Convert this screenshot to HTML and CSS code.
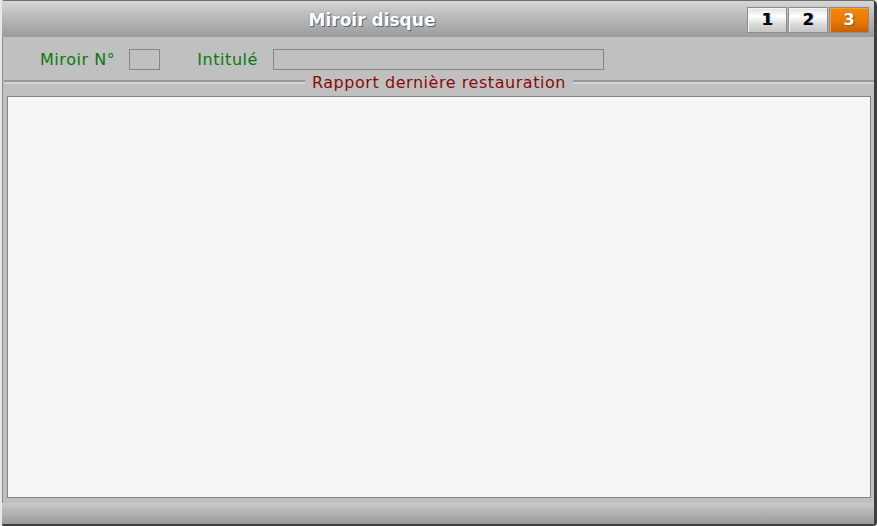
FILE: index.html
```html
<!DOCTYPE html>
<html lang="fr">
<head>
<meta charset="utf-8">
<title>Miroir disque</title>
<link rel="stylesheet" href="styles.css">
</head>
<body>
<div class="window">
  <div class="titlebar">
    <div class="title">Miroir disque</div>
    <div class="tabs">
      <div class="tab">1</div>
      <div class="tab">2</div>
      <div class="tab active">3</div>
    </div>
  </div>
  <div class="fields">
    <span class="label">Miroir N°</span>
    <span class="input small"></span>
    <span class="label second">Intitulé</span>
    <span class="input wide"></span>
  </div>
  <div class="group">
    <span class="line left"></span>
    <span class="legend">Rapport dernière restauration</span>
    <span class="line right"></span>
  </div>
  <div class="report"></div>
  <div class="footer"></div>
</div>
</body>
</html>
```
FILE: styles.css
```css
html, body {
  margin: 0;
  padding: 0;
  background: #dfe8e8;
}
.window {
  width: 877px;
  height: 526px;
  box-sizing: border-box;
  background: #c0c0c0;
  border-left: 2px solid #e8e8e8;
  box-shadow: inset 1px 0 0 #8a8a8a;
  border-right: 3px solid #3e3e3e;
  border-radius: 4px 5px 4px 3px;
  display: flex;
  flex-direction: column;
  font-family: "DejaVu Sans", Verdana, sans-serif;
  overflow: hidden;
}
.titlebar {
  height: 36px;
  border-top: 1px solid #6e6e6e;
  background: linear-gradient(#d6d6d6, #bcbcbc 40%, #9c9c9c);
  display: flex;
  align-items: center;
}
.title {
  flex: 1;
  text-align: center;
  color: #ffffff;
  font-weight: bold;
  font-size: 17px;
  text-shadow: 1px 1px 0 #5a6470, 0 0 2px #8090a0;
  padding-top: 1px;
  padding-right: 5px;
}
.tabs {
  display: flex;
  gap: 1px;
  margin-right: 5px;
  padding-top: 1px;
}
.tab {
  width: 38px;
  height: 24px;
  border: 1px solid #8c8c8c;
  background: linear-gradient(#e0e0e0, #ffffff 35%, #d8d8d8 70%, #c4c4c4);
  box-shadow: inset 1px 1px 0 #f4f4f4;
  text-align: center;
  font-weight: bold;
  font-size: 16px;
  line-height: 24px;
  color: #000000;
  text-shadow: 1px 0 0 #4060a0;
}
.tab.active {
  background: linear-gradient(#f08a10, #ee7a00 50%, #c86000);
  box-shadow: inset 1px 1px 0 #f8a030;
  color: #ffffff;
  text-shadow: 1px 1px 0 #806040;
}
.fields {
  display: flex;
  align-items: center;
  height: 21px;
  padding-top: 12px;
  padding-left: 38px;
}
.label {
  color: #0a7a0a;
  font-size: 16px;
  letter-spacing: 0.55px;
  line-height: 20px;
  padding-top: 1px;
}
.label.second {
  margin-left: 37px;
}
.input {
  box-sizing: border-box;
  height: 21px;
  border: 1px solid #858585;
}
.input.small {
  width: 31px;
  margin-left: 14px;
}
.input.wide {
  width: 331px;
  margin-left: 15px;
}
.group {
  display: flex;
  align-items: center;
  height: 16px;
  margin-top: 4px;
  margin-left: 2px;
}
.line {
  flex: 1;
  height: 2px;
  background: #989898;
  border-bottom: 2px solid #d4d4d4;
}
.legend {
  color: #8a0a0a;
  font-size: 16px;
  letter-spacing: 0.55px;
  line-height: 16px;
  padding: 1px 7px 0;
}
.report {
  height: 402px;
  box-sizing: border-box;
  margin: 6px 3px 0 5px;
  background: #f6f6f6;
  border: 1px solid #838383;
}
.footer {
  margin-top: 5px;
  flex: 1;
  background: linear-gradient(#cacaca, #a8a8a8 70%, #9a9a9a);
  border-bottom: 2px solid #3e3e3e;
}
```
